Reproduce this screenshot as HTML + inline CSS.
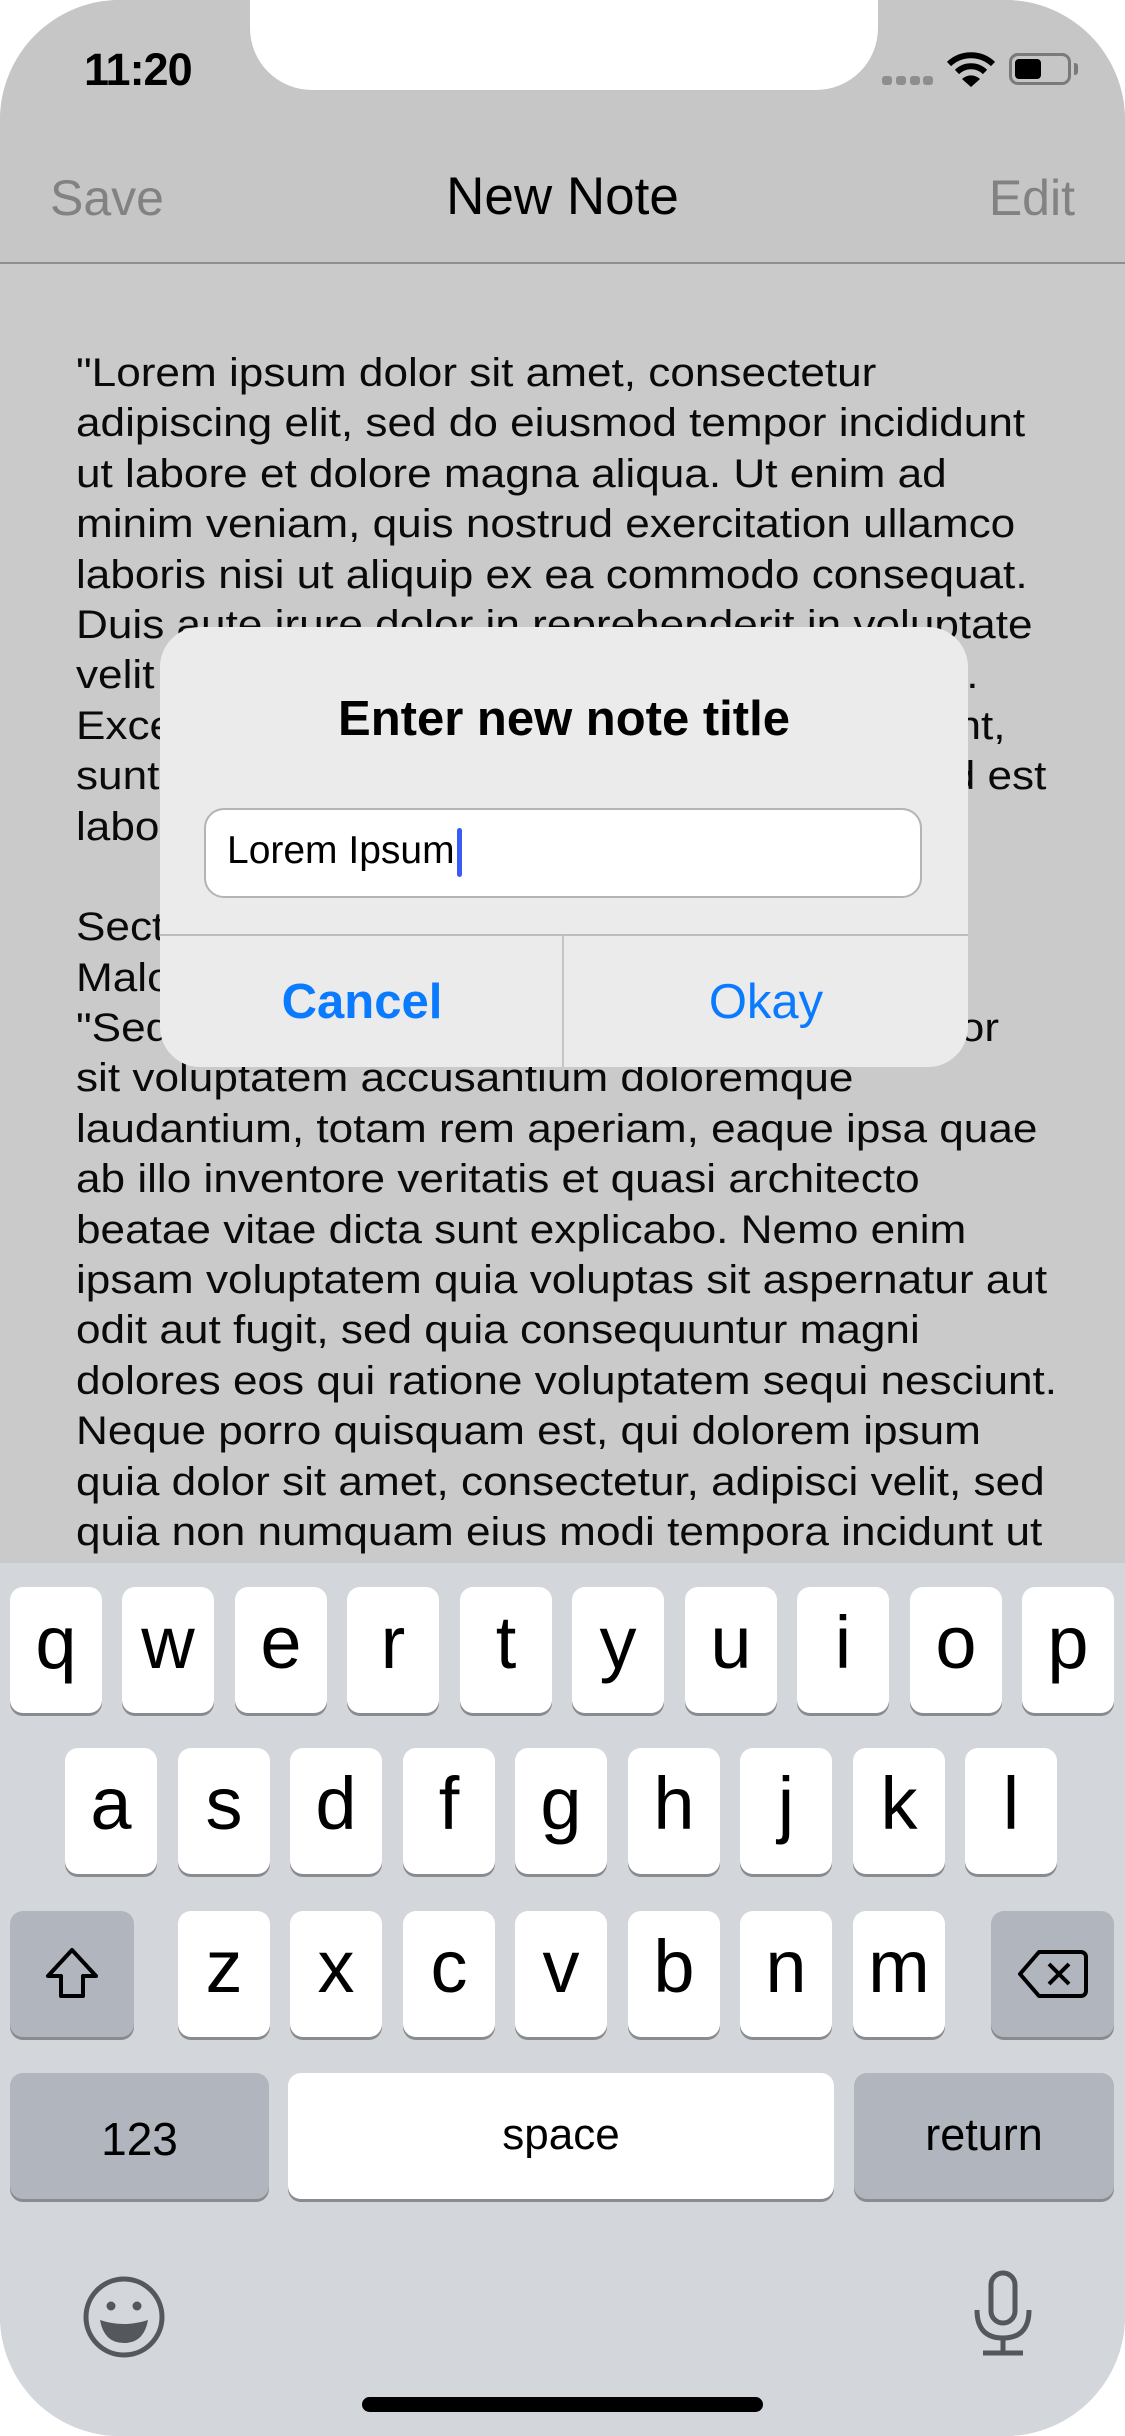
<!DOCTYPE html>
<html><head><meta charset="utf-8"><style>
*{margin:0;padding:0;box-sizing:border-box}
html,body{width:1125px;height:2436px;overflow:hidden;background:#fff;font-family:"Liberation Sans",sans-serif}
#scr{position:absolute;left:0;top:0;width:1125px;height:2436px;border-radius:120px;overflow:hidden;background:#cacaca}
#nav{position:absolute;left:0;top:0;width:1125px;height:264px;background:#c6c6c6;border-bottom:2px solid #8e8e8e}
.notch{position:absolute;left:250px;top:0;width:628px;height:90px;background:#fff;border-radius:0 0 62px 62px}
.t{position:absolute;white-space:nowrap}
#body{position:absolute;left:76px;top:348px;font-size:40px;line-height:50.4px;color:#0a0a0a;transform:scaleX(1.103);transform-origin:0 0}
#body div{white-space:pre;height:50.4px}
#kb{position:absolute;left:0;top:1563px;width:1125px;height:873px;background:#d3d6db}
.k{position:absolute;width:92px;height:126px;background:#fff;border-radius:13px;box-shadow:0 3px 0 #8a8b8f;font-size:74px;text-align:center;line-height:112px;color:#000}
.s{background:#b1b5bd}
#dlg{position:absolute;left:160px;top:627px;width:808px;height:440px;background:#ebebeb;border-radius:40px;overflow:hidden}
</style></head><body>
<div id="scr">
<div id="nav">
<div class="notch"></div>
<div class="t" style="left:84px;top:44px;font-size:45px;font-weight:bold;letter-spacing:-1px">11:20</div>
<div style="position:absolute;left:882px;top:76px;width:10px;height:9px;background:#8e8e8e;border-radius:3px;box-shadow:14px 0 0 #8e8e8e,28px 0 0 #8e8e8e,41px 0 0 #8e8e8e"></div>
<svg style="position:absolute;left:946px;top:50px" width="50" height="38" viewBox="0 0 50 38"><path d="M3 14 A32 32 0 0 1 47 14" stroke="#000" stroke-width="6" fill="none"/><path d="M11 22 A20 20 0 0 1 39 22" stroke="#000" stroke-width="6" fill="none"/><path d="M25 37 L16 29 A13 13 0 0 1 34 29 Z" fill="#000"/></svg>
<div style="position:absolute;left:1009px;top:53px;width:62px;height:32px;border:3px solid #7a7a7a;border-radius:9px"></div>
<div style="position:absolute;left:1015px;top:59px;width:26px;height:20px;background:#000;border-radius:4px"></div>
<div style="position:absolute;left:1074px;top:63px;width:4px;height:12px;background:#7a7a7a;border-radius:0 3px 3px 0"></div>
<div class="t" style="left:50px;top:169px;font-size:50px;color:#828282">Save</div>
<div class="t" style="left:0;width:1125px;text-align:center;top:166px;font-size:53px;color:#000">New Note</div>
<div class="t" style="right:50px;top:169px;font-size:50px;color:#828282">Edit</div>
</div>
<div id="body">
<div>"Lorem ipsum dolor sit amet, consectetur</div>
<div>adipiscing elit, sed do eiusmod tempor incididunt</div>
<div>ut labore et dolore magna aliqua. Ut enim ad</div>
<div>minim veniam, quis nostrud exercitation ullamco</div>
<div>laboris nisi ut aliquip ex ea commodo consequat.</div>
<div>Duis aute irure dolor in reprehenderit in voluptate</div>
<div>velit esse cillum dolore eu fugiat nulla pariatur.</div>
<div>Excepteur sint occaecat cupidatat non proident,</div>
<div>sunt in culpa qui officia deserunt mollit anim id est</div>
<div>laborum."</div>
<div> </div>
<div>Section 1.10.32 of "de Finibus Bonorum et</div>
<div>Malorum", written by Cicero in 45 BC</div>
<div>"Sed ut perspiciatis unde omnis iste natus error</div>
<div>sit voluptatem accusantium doloremque</div>
<div>laudantium, totam rem aperiam, eaque ipsa quae</div>
<div>ab illo inventore veritatis et quasi architecto</div>
<div>beatae vitae dicta sunt explicabo. Nemo enim</div>
<div>ipsam voluptatem quia voluptas sit aspernatur aut</div>
<div>odit aut fugit, sed quia consequuntur magni</div>
<div>dolores eos qui ratione voluptatem sequi nesciunt.</div>
<div>Neque porro quisquam est, qui dolorem ipsum</div>
<div>quia dolor sit amet, consectetur, adipisci velit, sed</div>
<div>quia non numquam eius modi tempora incidunt ut</div>
<div>labore et dolore magnam aliquam quaerat</div>
</div>
<div id="dlg">
<div class="t" style="left:0;width:808px;text-align:center;top:64px;font-size:49px;font-weight:bold;color:#000">Enter new note title</div>
<div style="position:absolute;left:44px;top:181px;width:718px;height:90px;background:#fff;border:2px solid #b4b4b4;border-radius:20px"></div>
<div class="t" style="left:67px;top:202px;font-size:39px;color:#000">Lorem Ipsum</div>
<div style="position:absolute;left:297px;top:201px;width:5px;height:49px;background:#3a5cf2;border-radius:3px"></div>
<div style="position:absolute;left:0;top:307px;width:808px;height:2px;background:#bdbdbd"></div>
<div style="position:absolute;left:402px;top:308px;width:2px;height:132px;background:#c4c4c4"></div>
<div class="t" style="left:0;width:404px;text-align:center;top:347px;font-size:49px;font-weight:bold;color:#0a7aff">Cancel</div>
<div class="t" style="left:404px;width:404px;text-align:center;top:347px;font-size:49px;color:#0a7aff">Okay</div>
</div>
<div id="kb">
<div class="k" style="left:10px;top:24px">q</div><div class="k" style="left:122px;top:24px">w</div><div class="k" style="left:235px;top:24px">e</div><div class="k" style="left:347px;top:24px">r</div><div class="k" style="left:460px;top:24px">t</div><div class="k" style="left:572px;top:24px">y</div><div class="k" style="left:685px;top:24px">u</div><div class="k" style="left:797px;top:24px">i</div><div class="k" style="left:910px;top:24px">o</div><div class="k" style="left:1022px;top:24px">p</div>
<div class="k" style="left:65px;top:185px">a</div><div class="k" style="left:178px;top:185px">s</div><div class="k" style="left:290px;top:185px">d</div><div class="k" style="left:403px;top:185px">f</div><div class="k" style="left:515px;top:185px">g</div><div class="k" style="left:628px;top:185px">h</div><div class="k" style="left:740px;top:185px">j</div><div class="k" style="left:853px;top:185px">k</div><div class="k" style="left:965px;top:185px">l</div>
<div class="k s" style="left:10px;top:348px;width:124px"><svg width="60" height="56" viewBox="0 0 60 56" style="margin-top:35px"><path d="M30 4 L6 30 H19 V50 H41 V30 H54 Z" fill="none" stroke="#000" stroke-width="4" stroke-linejoin="round"/></svg></div>
<div class="k" style="left:178px;top:348px">z</div><div class="k" style="left:290px;top:348px">x</div><div class="k" style="left:403px;top:348px">c</div><div class="k" style="left:515px;top:348px">v</div><div class="k" style="left:628px;top:348px">b</div><div class="k" style="left:740px;top:348px">n</div><div class="k" style="left:853px;top:348px">m</div>
<div class="k s" style="left:991px;top:348px;width:123px"><svg width="72" height="50" viewBox="0 0 72 50" style="margin-top:38px"><path d="M22 3 H64 A5 5 0 0 1 69 8 V42 A5 5 0 0 1 64 47 H22 L3 25 Z" fill="none" stroke="#000" stroke-width="4" stroke-linejoin="round"/><path d="M32 15 L52 35 M52 15 L32 35" stroke="#000" stroke-width="4"/></svg></div>
<div class="k s" style="left:10px;top:510px;width:259px;font-size:46px;line-height:132px">123</div>
<div class="k" style="left:288px;top:510px;width:546px;font-size:44px;line-height:124px">space</div>
<div class="k s" style="left:854px;top:510px;width:260px;font-size:45px;line-height:124px">return</div>
<svg style="position:absolute;left:82px;top:712px" width="84" height="84" viewBox="0 0 84 84"><circle cx="42" cy="42" r="38" fill="none" stroke="#54575c" stroke-width="5"/><circle cx="29" cy="31" r="4.5" fill="#54575c"/><circle cx="55" cy="31" r="4.5" fill="#54575c"/><path d="M18 45 Q42 53 66 45 Q62 68 42 68 Q22 68 18 45 Z" fill="#54575c"/></svg>
<svg style="position:absolute;left:972px;top:707px" width="62" height="86" viewBox="0 0 62 86"><rect x="19" y="3" width="24" height="50" rx="12" fill="none" stroke="#54575c" stroke-width="5"/><path d="M5 40 Q5 68 31 68 Q57 68 57 40" fill="none" stroke="#54575c" stroke-width="5"/><path d="M31 68 V82 M11 83 H51" stroke="#54575c" stroke-width="5"/></svg>
<div style="position:absolute;left:362px;top:834px;width:401px;height:15px;background:#000;border-radius:8px"></div>
</div>
</div>
</body></html>
